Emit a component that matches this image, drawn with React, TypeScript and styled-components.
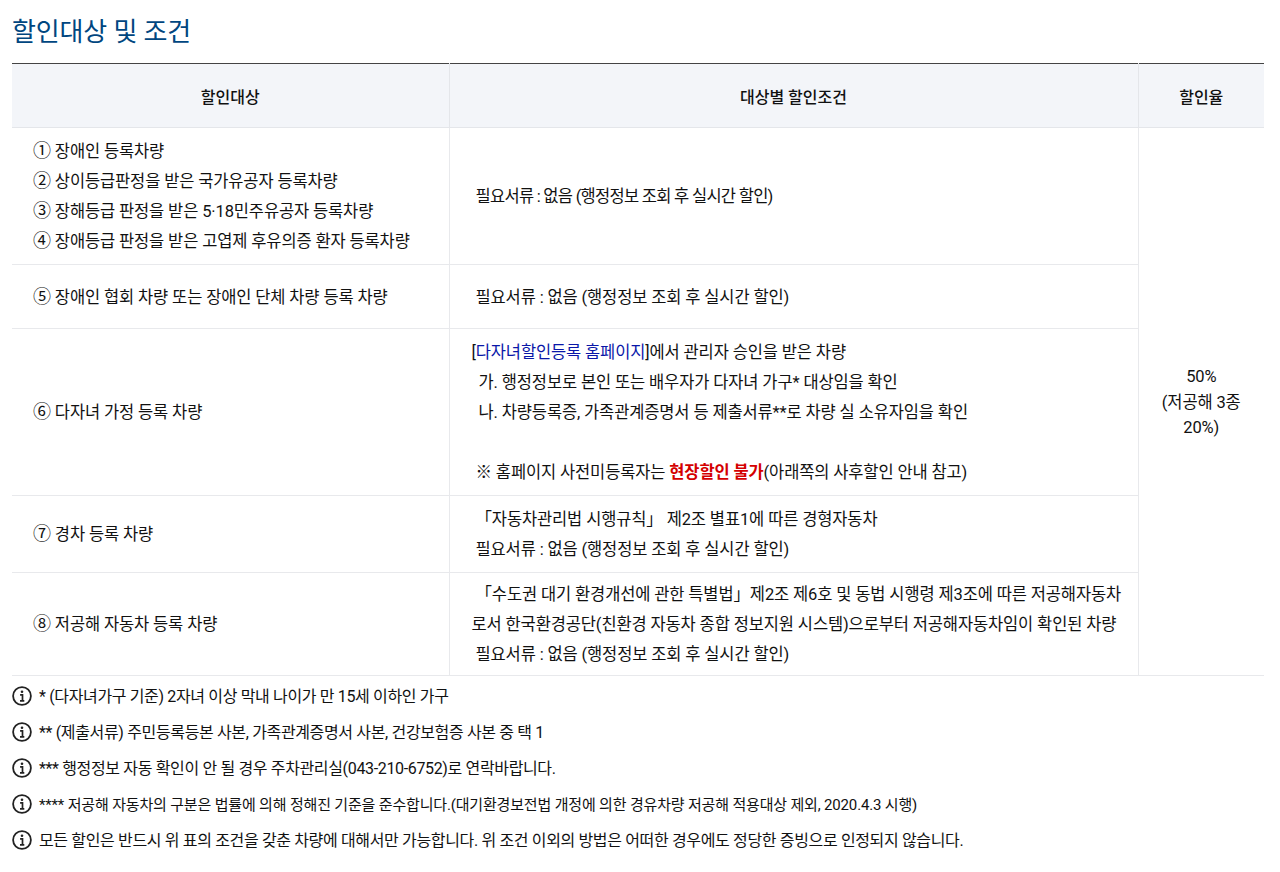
import React from 'react';
import styled, { createGlobalStyle } from 'styled-components';

const GlobalStyle = createGlobalStyle`
  html, body {
    margin: 0;
    padding: 0;
    background: #fff;
  }
  body {
    font-family: Roboto, "Noto Sans CJK KR", sans-serif;
    color: #111;
  }
`;

const Page = styled.div`
  width: 1280px;
  height: 872px;
  padding: 0 16px 0 12px;
  box-sizing: border-box;
  overflow: hidden;
`;

const Title = styled.h2`
  margin: 0;
  padding-top: 15px;
  height: 63px;
  box-sizing: border-box;
  font-size: 26px;
  line-height: 34px;
  font-weight: 400;
  letter-spacing: -0.15px;
  color: #00467f;
`;

const Table = styled.table`
  width: 1252px;
  border-collapse: collapse;
  table-layout: fixed;
  border-top: 1px solid #444;
  font-size: 16.5px;
  letter-spacing: -0.13px;
`;

const HeadCell = styled.th`
  height: 63px;
  padding: 0;
  background: #f3f5f9;
  border-bottom: 1px solid #e4e6ea;
  border-left: 1px solid #e4e6ea;
  font-size: 16px;
  letter-spacing: 0;
  font-weight: 500;
  text-align: center;
  &:first-child {
    border-left: 0;
  }
`;

const Row = styled.tr<{ $height: number }>`
  height: ${(p) => p.$height}px;
`;

const Cell = styled.td<{ $pad?: number }>`
  padding: 2px 0 0 ${(p) => p.$pad ?? 21}px;
  border-bottom: 1px solid #e8e9ec;
  border-left: 1px solid #e8e9ec;
  line-height: 30px;
  &:first-child {
    border-left: 0;
  }
`;

const RateCell = styled.td`
  padding: 2px 8px 0;
  border-bottom: 1px solid #e8e9ec;
  border-left: 1px solid #e8e9ec;
  line-height: 25.5px;
  text-align: center;
`;

const Line = styled.div<{ $indent?: number; $tight?: boolean }>`
  margin-left: ${(p) => p.$indent ?? 0}px;
  min-height: 30px;
  white-space: nowrap;
  letter-spacing: ${(p) => (p.$tight ? '-0.72px' : 'inherit')};
`;

const Num = styled.span`
  font-size: 18px;
  line-height: 0;
`;

const SiteLink = styled.a`
  color: #0a17a8;
`;

const Alert = styled.b`
  color: #d40000;
  font-weight: 700;
`;

const Notes = styled.ul`
  list-style: none;
  margin: 0;
  padding: 1px 0 0;
`;

const Note = styled.li<{ $small?: boolean }>`
  display: flex;
  align-items: center;
  gap: 7px;
  height: 36px;
  font-size: ${(p) => (p.$small ? 15 : 16)}px;
  letter-spacing: ${(p) => (p.$small ? '-0.17px' : '-0.35px')};
  white-space: nowrap;
`;

const IconSvg = styled.svg`
  flex: none;
  margin-top: 1px;
`;

const InfoIcon = () => (
  <IconSvg width="20" height="20" viewBox="0 0 20 20" fill="none" stroke="#222" aria-hidden="true">
    <circle cx="10" cy="10" r="8.9" strokeWidth="1.8" />
    <circle cx="10" cy="5.8" r="1.3" fill="#222" stroke="none" />
    <path d="M8.1 8.8H10.5V14.6M8 14.8H12.3" strokeWidth="1.7" />
  </IconSvg>
);

const noteItems = [
  { text: '* (다자녀가구 기준) 2자녀 이상 막내 나이가 만 15세 이하인 가구' },
  { text: '** (제출서류) 주민등록등본 사본, 가족관계증명서 사본, 건강보험증 사본 중 택 1' },
  { text: '*** 행정정보 자동 확인이 안 될 경우 주차관리실(043-210-6752)로 연락바랍니다.' },
  {
    text: '**** 저공해 자동차의 구분은 법률에 의해 정해진 기준을 준수합니다.(대기환경보전법 개정에 의한 경유차량 저공해 적용대상 제외, 2020.4.3 시행)',
    small: true,
  },
  { text: '모든 할인은 반드시 위 표의 조건을 갖춘 차량에 대해서만 가능합니다. 위 조건 이외의 방법은 어떠한 경우에도 정당한 증빙으로 인정되지 않습니다.' },
];

const DOCS = '필요서류 : 없음 (행정정보 조회 후 실시간 할인)';

const App: React.FC = () => {
  return (
    <Page>
      <GlobalStyle />
      <Title>할인대상 및 조건</Title>
      <Table>
        <colgroup>
          <col style={{ width: 437 }} />
          <col style={{ width: 689 }} />
          <col style={{ width: 126 }} />
        </colgroup>
        <thead>
          <tr>
            <HeadCell>할인대상</HeadCell>
            <HeadCell>대상별 할인조건</HeadCell>
            <HeadCell>할인율</HeadCell>
          </tr>
        </thead>
        <tbody>
          <Row $height={137}>
            <Cell>
              <Line><Num>①</Num> 장애인 등록차량</Line>
              <Line><Num>②</Num> 상이등급판정을 받은 국가유공자 등록차량</Line>
              <Line><Num>③</Num> 장해등급 판정을 받은 5·18민주유공자 등록차량</Line>
              <Line><Num>④</Num> 장애등급 판정을 받은 고엽제 후유의증 환자 등록차량</Line>
            </Cell>
            <Cell $pad={26}>
              <Line $tight>{DOCS}</Line>
            </Cell>
            <RateCell rowSpan={5}>
              50%
              <br />
              (저공해 3종 20%)
            </RateCell>
          </Row>
          <Row $height={64}>
            <Cell><Num>⑤</Num> 장애인 협회 차량 또는 장애인 단체 차량 등록 차량</Cell>
            <Cell $pad={26}>{DOCS}</Cell>
          </Row>
          <Row $height={167}>
            <Cell><Num>⑥</Num> 다자녀 가정 등록 차량</Cell>
            <Cell>
              <Line $indent={1}>
                [<SiteLink>다자녀할인등록 홈페이지</SiteLink>]에서 관리자 승인을 받은 차량
              </Line>
              <Line $indent={8}>가. 행정정보로 본인 또는 배우자가 다자녀 가구* 대상임을 확인</Line>
              <Line $indent={8}>나. 차량등록증, 가족관계증명서 등 제출서류**로 차량 실 소유자임을 확인</Line>
              <Line />
              <Line $indent={5}>
                ※ 홈페이지 사전미등록자는 <Alert>현장할인 불가</Alert>(아래쪽의 사후할인 안내 참고)
              </Line>
            </Cell>
          </Row>
          <Row $height={77}>
            <Cell><Num>⑦</Num> 경차 등록 차량</Cell>
            <Cell>
              <Line $indent={5}>「자동차관리법 시행규칙」 제2조 별표1에 따른 경형자동차</Line>
              <Line $indent={5}>{DOCS}</Line>
            </Cell>
          </Row>
          <Row $height={103}>
            <Cell><Num>⑧</Num> 저공해 자동차 등록 차량</Cell>
            <Cell>
              <Line $indent={5}>「수도권 대기 환경개선에 관한 특별법」제2조 제6호 및 동법 시행령 제3조에 따른 저공해자동차</Line>
              <Line $indent={1}>로서 한국환경공단(친환경 자동차 종합 정보지원 시스템)으로부터 저공해자동차임이 확인된 차량</Line>
              <Line $indent={5}>{DOCS}</Line>
            </Cell>
          </Row>
        </tbody>
      </Table>
      <Notes>
        {noteItems.map((n) => (
          <Note key={n.text} $small={n.small}>
            <InfoIcon />
            <span>{n.text}</span>
          </Note>
        ))}
      </Notes>
    </Page>
  );
};

export default App;
